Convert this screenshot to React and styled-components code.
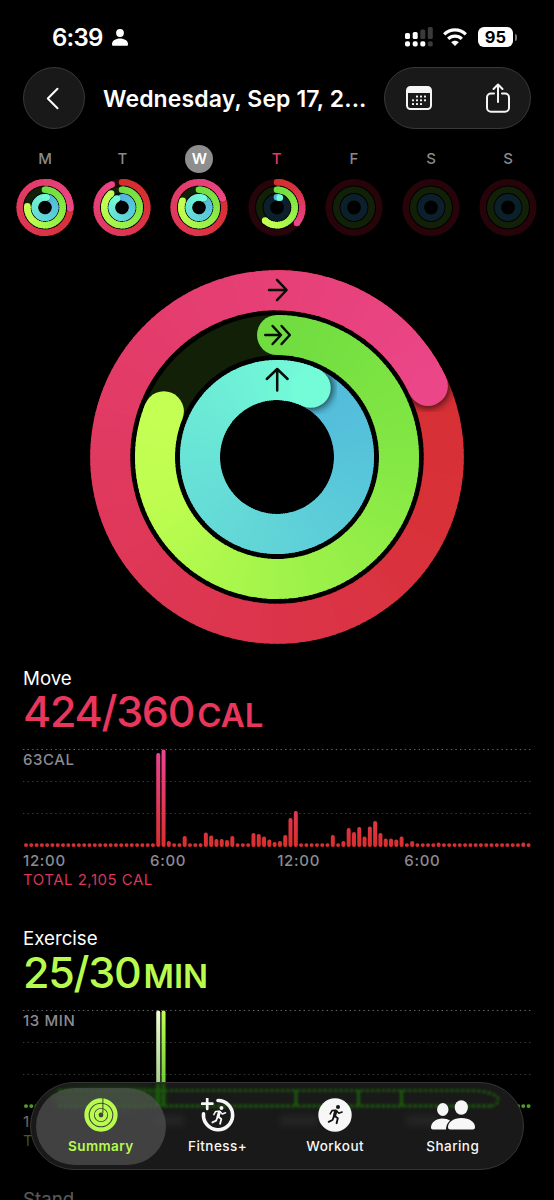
import styled, { createGlobalStyle } from "styled-components";

const GlobalStyle = createGlobalStyle`
  * {
    box-sizing: border-box;
  }
  html,
  body {
    margin: 0;
    background: #000;
  }
  body {
    overflow: hidden;
    font-family: Inter, "Liberation Sans", sans-serif;
    color: #fff;
    -webkit-font-smoothing: antialiased;
  }
`;

const Screen = styled.div`
  position: relative;
  width: 554px;
  height: 1200px;
  overflow: hidden;
  background: #000;
`;

const StatusBar = styled.div`
  display: flex;
  align-items: center;
  justify-content: space-between;
  height: 67px;
  padding: 7px 37.5px 0 52px;
`;

const StatusGroup = styled.div`
  display: flex;
  align-items: center;
  gap: ${(p) => p.$gap}px;
`;

const Time = styled.span`
  font-size: 24px;
  font-weight: 600;
  letter-spacing: -0.75px;
`;

const Battery = styled.div`
  display: flex;
  align-items: center;
`;

const BatteryLevel = styled.span`
  width: 35px;
  height: 20px;
  border-radius: 6px;
  background: #fff;
  color: #000;
  font-size: 16.5px;
  font-weight: 700;
  line-height: 20px;
  text-align: center;
`;

const BatteryTip = styled.span`
  width: 2px;
  height: 7px;
  margin-left: 1.5px;
  border-radius: 0 2px 2px 0;
  background: #777;
`;

const Header = styled.header`
  display: flex;
  align-items: center;
  padding: 0 23px;
`;

const GlassButton = styled.div`
  display: flex;
  align-items: center;
  justify-content: ${(p) => (p.$wide ? "space-between" : "center")};
  flex: none;
  width: ${(p) => (p.$wide ? 147 : 62)}px;
  height: 62px;
  padding: ${(p) => (p.$wide ? "0 20px 0 21px" : "0 3px 0 0")};
  border: 1px solid #383838;
  border-radius: 31px;
  background: #191919;
`;

const Title = styled.h1`
  flex: 1;
  margin: 0 0 0 18px;
  padding-top: 1px;
  font-size: 23px;
  font-weight: 600;
  letter-spacing: 0.12px;
  white-space: nowrap;
`;

const Week = styled.div`
  display: grid;
  grid-template-columns: repeat(7, 77.2px);
  padding: 16.4px 0 0 6.5px;
`;

const Day = styled.div`
  display: flex;
  flex-direction: column;
  align-items: center;
  gap: 5px;
`;

const DayLetter = styled.span`
  width: 28px;
  height: 28px;
  border-radius: 50%;
  background: ${(p) => (p.$selected ? "#8e8e8e" : "transparent")};
  color: ${(p) => (p.$selected ? "#fff" : p.$today ? "#e9365f" : "#8a8a8d")};
  font-size: 15px;
  font-weight: ${(p) => (p.$selected ? 600 : 500)};
  line-height: 28px;
  text-align: center;
`;

const RingsWrap = styled.div`
  display: flex;
  justify-content: center;
  padding: 32.6px 0 24px;
`;

const Section = styled.section`
  height: 260.4px;
  padding: 0 23px;
`;

const SectionName = styled.div`
  height: 22px;
  font-size: 18.7px;
  line-height: 22px;
`;

const Value = styled.div`
  height: 46px;
  margin-top: -1.5px;
  color: ${(p) => p.$color};
  font-size: 43px;
  font-weight: 450;
  line-height: 46px;
  letter-spacing: -1.25px;
  white-space: nowrap;
`;

const Unit = styled.span`
  margin-left: 3px;
  font-size: 33px;
  font-weight: 600;
  letter-spacing: 0;
`;

const Plot = styled.div`
  position: relative;
  height: 98px;
  margin-top: 15px;
`;

const PlotMax = styled.span`
  display: block;
  padding-top: 2px;
  color: #8b8b90;
  font-size: 15px;
  font-weight: 500;
  line-height: 18px;
  letter-spacing: 0.6px;
`;

const PlotCanvas = styled.svg`
  position: absolute;
  inset: 0;
`;

const Axis = styled.div`
  display: grid;
  grid-template-columns: repeat(4, 127.1px);
  padding-top: 4px;
  color: #8b8b90;
  font-size: 15px;
  font-weight: 500;
  line-height: 20px;
  letter-spacing: 0.7px;
`;

const Total = styled.div`
  color: ${(p) => p.$color};
  font-size: 15px;
  line-height: 18px;
  letter-spacing: 0.5px;
`;

const BottomFade = styled.div`
  position: absolute;
  left: 0;
  right: 0;
  bottom: 0;
  height: 110px;
  background: linear-gradient(rgba(0, 0, 0, 0), rgba(0, 0, 0, 0.65) 60%);
`;

const TabBar = styled.nav`
  position: absolute;
  left: 30px;
  bottom: 30px;
  display: flex;
  align-items: center;
  width: 494px;
  height: 88px;
  padding: 0 4.5px;
  overflow: hidden;
  border: 1px solid #353535;
  border-radius: 44px;
  background: #191919;
`;

const Refraction = styled.svg`
  position: absolute;
  left: -1px;
  top: -1px;
`;

const Tab = styled.div`
  position: relative;
  display: flex;
  flex: none;
  flex-direction: column;
  align-items: center;
  width: ${(p) => (p.$active ? 130.6 : 117.6)}px;
  height: 77px;
  margin-right: ${(p) => (p.$active ? -7.3 : 0)}px;
  padding-top: 10.5px;
  border-radius: 39px;
  background: ${(p) => (p.$active ? "rgba(84, 84, 86, 0.68)" : "transparent")};
  color: ${(p) => (p.$active ? "#b8fa4e" : "#f7f7f7")};
`;

const TabLabel = styled.span`
  margin-top: 4.5px;
  font-size: 13.5px;
  font-weight: ${(p) => (p.$active ? 600 : 500)};
  line-height: 18px;
  letter-spacing: ${(p) => (p.$active ? 0.4 : 0.45)}px;
`;

const RINGS = {
  move: {
    track: "#26040a",
    stops: [
      [0, [211, 46, 46]],
      [0.25, [216, 49, 56]],
      [0.5, [221, 54, 82]],
      [0.8, [229, 62, 114]],
      [1, [235, 70, 136]],
    ],
  },
  exercise: {
    track: "#112006",
    stops: [
      [0, [112, 220, 64]],
      [0.3, [131, 231, 68]],
      [0.6, [160, 243, 74]],
      [0.85, [190, 253, 80]],
      [1, [196, 255, 84]],
    ],
  },
  stand: {
    track: "#0c202c",
    stops: [
      [0, [82, 182, 220]],
      [0.25, [87, 197, 218]],
      [0.5, [98, 213, 215]],
      [0.8, [108, 235, 214]],
      [1, [116, 252, 216]],
    ],
  },
};

const mix = (stops, t) => {
  const i = Math.max(1, stops.findIndex(([at]) => at >= t));
  const [a, from] = stops[i - 1];
  const [b, to] = stops[i];
  const k = (t - a) / (b - a);
  return `rgb(${from.map((c, n) => Math.round(c + (to[n] - c) * k)).join(",")})`;
};

const point = (c, r, deg) => {
  const rad = (deg * Math.PI) / 180;
  return [c + r * Math.sin(rad), c - r * Math.cos(rad)];
};

const Ring = ({ id, kind, c, r, width, sweep, shadow }) => {
  const { track, stops } = RINGS[kind];
  const step = r > 50 ? 2 : 8;
  // neighbours overlap by at least a pixel so that no seam shows between them
  const overlap = Math.min(step, 70 / r);
  const segments = [];
  for (let a = 0; a < sweep; a += step) {
    const end = Math.min(sweep, a + step);
    const [x1, y1] = point(c, r, Math.max(0, a - overlap));
    const [x2, y2] = point(c, r, end);
    segments.push({
      from: a,
      d: `M${x1} ${y1}A${r} ${r} 0 0 1 ${x2} ${y2}`,
      color: mix(stops, Math.min(1, a / sweep)),
    });
  }
  const draw = (list) =>
    list.map((s) => (
      <path key={s.from} d={s.d} stroke={s.color} strokeWidth={width} fill="none" />
    ));
  const split = sweep - 60;
  const [sx, sy] = point(c, r, 0);
  const [ex, ey] = point(c, r, sweep);

  return (
    <g>
      <circle cx={c} cy={c} r={r} stroke={track} strokeWidth={width} fill="none" />
      {sweep > 0 && (
        <>
          <circle cx={sx} cy={sy} r={width / 2} fill={mix(stops, 0)} />
          {draw(segments.filter((s) => s.from < split))}
          {sweep > 360 && (
            <>
              <mask id={`${id}-${kind}`}>
                <circle cx={c} cy={c} r={r} stroke="#fff" strokeWidth={width} fill="none" />
              </mask>
              <g mask={`url(#${id}-${kind})`}>
                <circle
                  cx={ex}
                  cy={ey}
                  r={width / 2 + shadow / 2}
                  fill="#000"
                  opacity="0.75"
                  style={{ filter: `blur(${shadow}px)` }}
                />
              </g>
            </>
          )}
          {draw(segments.filter((s) => s.from >= split))}
          <circle cx={ex} cy={ey} r={width / 2} fill={mix(stops, 1)} />
        </>
      )}
    </g>
  );
};

const DAYS = [
  { letter: "M", sweeps: [453, 274, 370] },
  { letter: "T", sweeps: [336, 322, 330] },
  { letter: "W", sweeps: [430, 292, 388], selected: true },
  { letter: "T", sweeps: [128, 222, 16], today: true },
  { letter: "F", sweeps: [0, 0, 0] },
  { letter: "S", sweeps: [0, 0, 0] },
  { letter: "S", sweeps: [0, 0, 0] },
];

const MiniRings = ({ id, sweeps }) => (
  <svg width="58" height="59" viewBox="0 -0.5 58 59">
    <Ring id={id} kind="move" c={29} r={25.3} width={6.5} sweep={sweeps[0]} shadow={0.5} />
    <Ring id={id} kind="exercise" c={29} r={17.7} width={6.6} sweep={sweeps[1]} shadow={0.5} />
    <Ring id={id} kind="stand" c={29} r={10.2} width={6.6} sweep={sweeps[2]} shadow={0.3} />
  </svg>
);

const ActivityRings = () => (
  <svg width="374" height="374" viewBox="0 0 374 374">
    <Ring id="big" kind="move" c={187} r={166.8} width={40} sweep={424.8} shadow={4} />
    <Ring id="big" kind="exercise" c={187} r={122} width={40} sweep={292} shadow={4} />
    <Ring id="big" kind="stand" c={187} r={77} width={40} sweep={386} shadow={4} />
    <g
      fill="none"
      stroke="#060d08"
      strokeWidth="2.5"
      strokeLinecap="round"
      strokeLinejoin="round"
    >
      <path d="M179 20H196.2M187 9.8L196.6 20L187 30.2" />
      <path d="M175.3 65H190.6M182.6 56L191 65L182.6 74M191.6 56L199.8 65L191.6 74" />
      <path d="M187.2 120.6V99.4M176.8 109L187.2 99L197.6 109" />
    </g>
  </svg>
);

const SLOTS = 96;
const MIN_BAR = 3.8;

const fillSlots = (known) =>
  Array.from({ length: SLOTS }, (_, i) => known[i] ?? MIN_BAR);

const MOVE_BARS = fillSlots({
  25: 94, 26: 97.5, 27: 6, 30: 11, 34: 14.5, 35: 11.5, 36: 8, 37: 8, 38: 7,
  39: 11, 43: 14, 44: 13, 45: 10.5, 46: 7.5, 47: 5, 48: 6, 49: 12, 50: 29,
  51: 36, 58: 12, 60: 6, 61: 19, 62: 15, 63: 20, 64: 10.5, 65: 20.5, 66: 26,
  67: 14, 68: 8.5, 69: 8.5, 70: 7.5, 71: 10.5, 73: 6, 78: 4.5, 94: 4.5,
});

const EXERCISE_BARS = fillSlots({ 25: 97.5, 26: 97.5 });

const BarPlot = ({ id, bars, top, bottom, paleSlot }) => (
  <PlotCanvas width="508" height="98" viewBox="0 0 508 98">
    <defs>
      <linearGradient id={id} gradientUnits="userSpaceOnUse" x1="0" y1="0" x2="0" y2="98">
        <stop offset="0" stopColor={top} />
        <stop offset="1" stopColor={bottom} />
      </linearGradient>
      <linearGradient id={`${id}-pale`} gradientUnits="userSpaceOnUse" x1="0" y1="0" x2="0" y2="98">
        <stop offset="0" stopColor="#efffd6" />
        <stop offset="1" stopColor="#8fbf70" />
      </linearGradient>
    </defs>
    {[0.5, 32.5, 64.5].map((y, i) => (
      <path
        key={y}
        d={`M0 ${y}H508`}
        stroke={i === 0 ? "#666" : "#3c3c3c"}
        strokeWidth="1"
        strokeDasharray="1.4 3.2"
      />
    ))}
    {bars.map((h, i) => (
      <rect
        key={i}
        x={1 + i * 5.29}
        y={98 - h}
        width="4"
        height={h}
        rx="1.9"
        fill={`url(#${i === paleSlot ? `${id}-pale` : id})`}
      />
    ))}
  </PlotCanvas>
);

const Metric = ({ name, value, unit, color, max, total, totalColor, children }) => (
  <Section>
    <SectionName>{name}</SectionName>
    <Value $color={color}>
      {value}
      <Unit>{unit}</Unit>
    </Value>
    <Plot>
      {children}
      <PlotMax>{max}</PlotMax>
    </Plot>
    <Axis>
      <span>12:00</span>
      <span>6:00</span>
      <span>12:00</span>
      <span>6:00</span>
    </Axis>
    <Total $color={totalColor}>{total}</Total>
  </Section>
);

const PersonIcon = () => (
  <svg width="16" height="17" viewBox="0 0 16 17" fill="#fff">
    <circle cx="8" cy="4" r="3.9" />
    <path d="M0 15.2C0 11.8 3.5 9.6 8 9.6s8 2.2 8 5.6c0 1-.5 1.5-1.5 1.5h-13C.5 16.7 0 16.2 0 15.2z" />
  </svg>
);

const SignalIcon = () => (
  <svg width="28" height="20" viewBox="0 0 28 20">
    <g fill="#fff">
      <rect x="0" y="6" width="5" height="6" rx="1.6" />
      <rect x="7.7" y="5" width="5" height="7" rx="1.6" />
      <rect x="0" y="14.2" width="5" height="5.3" rx="1.9" />
      <rect x="7.7" y="14.2" width="5" height="5.3" rx="1.9" />
      <rect x="15.3" y="14.2" width="5" height="5.3" rx="1.9" />
    </g>
    <g fill="#3a3a3a">
      <rect x="15.3" y="2.5" width="5" height="9.5" rx="1.6" />
      <rect x="22.8" y="0" width="5" height="12" rx="1.6" />
      <rect x="22.8" y="14.2" width="5" height="5.3" rx="1.9" />
    </g>
  </svg>
);

const WifiIcon = () => (
  <svg width="24" height="18" viewBox="0 0 24 18" fill="none" stroke="#fff" strokeWidth="3.2">
    <path d="M1.2 6.4C7.2 .4 16.8 .4 22.8 6.4" />
    <path d="M5.2 10.8C9 7.1 15 7.1 18.8 10.8" />
    <path d="M12 18L8.2 14.2C10.5 12.2 13.5 12.2 15.8 14.2z" fill="#fff" stroke="none" />
  </svg>
);

const BackIcon = () => (
  <svg width="13" height="23" viewBox="0 0 13 23">
    <path
      d="M11.5 1.8L1.8 11.5L11.5 21.2"
      fill="none"
      stroke="#fff"
      strokeWidth="2"
      strokeLinecap="round"
      strokeLinejoin="round"
    />
  </svg>
);

const CalendarIcon = () => (
  <svg width="26" height="24" viewBox="0 0 26 24">
    <rect x="1" y="1" width="24" height="22" rx="3.5" fill="none" stroke="#f5f5f5" strokeWidth="2" />
    <path d="M1 7V4.5A3.5 3.5 0 0 1 4.5 1h17A3.5 3.5 0 0 1 25 4.5V7z" fill="#f5f5f5" />
    <g fill="#f5f5f5">
      {[
        [10, 10.4], [14, 10.4], [18, 10.4],
        [6, 14.2], [10, 14.2], [14, 14.2], [18, 14.2],
        [6, 18], [10, 18], [14, 18],
      ].map(([x, y]) => (
        <rect key={`${x}-${y}`} x={x} y={y - 0.9} width="2" height="2" rx=".5" />
      ))}
    </g>
  </svg>
);

const ShareIcon = () => (
  <svg
    width="24"
    height="31"
    viewBox="0 0 24 31"
    fill="none"
    stroke="#f5f5f5"
    strokeWidth="2"
    strokeLinecap="round"
    strokeLinejoin="round"
  >
    <path d="M8 10.5H5A4 4 0 0 0 1 14.5V24.8A4 4 0 0 0 5 28.8H19A4 4 0 0 0 23 24.8V14.5A4 4 0 0 0 19 10.5H16" />
    <path d="M12 19V1.7M7.5 6L12 1.5L16.5 6" />
  </svg>
);

const Runner = ({ x, y, scale = 1, color }) => (
  <g transform={`translate(${x} ${y}) scale(${scale})`}>
    <circle cx="10.2" cy="2" r="2" fill={color} />
    <g fill="none" stroke={color} strokeLinecap="round" strokeLinejoin="round">
      <path d="M8 6.3L6.7 10.8" strokeWidth="3.2" />
      <path d="M7.8 5.4L4.2 5.6L2.4 8.8" strokeWidth="1.6" />
      <path d="M8.7 5.7L11 8.2L14.3 7" strokeWidth="1.6" />
      <path d="M7 11L10 13.2L8.8 18.2" strokeWidth="1.9" />
      <path d="M6.2 11.2L4.7 15L.9 16.8" strokeWidth="1.9" />
    </g>
  </g>
);

const SummaryIcon = () => (
  <svg width="34" height="34" viewBox="0 0 34 34" fill="none" stroke="#b8fa4e">
    <circle cx="17" cy="17" r="14.5" strokeWidth="4.3" />
    <circle cx="17" cy="17" r="9.2" strokeWidth="4.2" />
    <circle cx="17" cy="17" r="4.3" strokeWidth="3.8" />
    <path d="M18.9 0V15" stroke="#3b4526" strokeWidth="1" />
  </svg>
);

const FitnessIcon = () => (
  <svg width="34" height="34" viewBox="0 0 34 34">
    <g fill="none" stroke="#f7f7f7" strokeWidth="3.6" strokeLinecap="round">
      <path d="M17 2.5A14.6 14.6 0 1 1 2.5 15.8" />
      <path d="M6.2 0.5V10.9M1 5.7H11.4" strokeWidth="2.7" />
    </g>
    <Runner x={10.5} y={8} color="#f7f7f7" scale={0.98} />
  </svg>
);

const WorkoutIcon = () => (
  <svg width="34" height="34" viewBox="0 0 34 34">
    <circle cx="17" cy="17" r="16.7" fill="#f7f7f7" />
    <Runner x={9.8} y={7} color="#151515" />
  </svg>
);

const SharingIcon = () => (
  <svg width="46" height="34" viewBox="0 0 46 34" fill="#f7f7f7">
    <ellipse cx="12.8" cy="11.5" rx="5.7" ry="6.5" />
    <path d="M1 29.5C1 24.5 6 20.5 12.5 20.5C15.5 20.5 18 21.2 20 22.5C17.3 25 16 27.8 16 31.5H3C1.7 31.5 1 30.8 1 29.5z" />
    <ellipse cx="31.3" cy="9.5" rx="6.6" ry="7.3" />
    <path d="M18 29C18 24 23.5 20 31.5 20S45 24 45 29C45 30.7 44.2 31.5 42.5 31.5H20.5C18.8 31.5 18 30.7 18 29z" />
  </svg>
);

// the exercise chart seen through the glass of the bar
const GlassRefraction = () => (
  <Refraction width="494" height="88" viewBox="0 0 494 88">
    <g stroke="#1c6409" fill="none" style={{ filter: "blur(0.9px)" }}>
      <path d="M28 24H462" strokeWidth="4" strokeDasharray="4 1.3" opacity=".65" />
      <path d="M28 8.5H440Q462 9 468 16Q469 23 461 24" strokeWidth="3.5" strokeDasharray="4 1.3" opacity=".6" />
      <path d="M266 8V24M328.5 8V24M371.5 8V24" strokeWidth="3.5" opacity=".75" />
      <path d="M128 1V24M133.5 1V24" strokeWidth="4" opacity=".75" />
    </g>
    <ellipse cx="78" cy="16" rx="58" ry="11" fill="#1f7a08" opacity=".4" style={{ filter: "blur(5px)" }} />
    <g fill="#242424" style={{ filter: "blur(3px)" }}>
      <rect x="124" y="33" width="30" height="11" />
      <rect x="250" y="33" width="38" height="11" />
      <rect x="376" y="33" width="32" height="11" />
    </g>
  </Refraction>
);

const TABS = [
  { label: "Summary", Icon: SummaryIcon, active: true },
  { label: "Fitness+", Icon: FitnessIcon },
  { label: "Workout", Icon: WorkoutIcon },
  { label: "Sharing", Icon: SharingIcon },
];

const App = () => {
  return (
    <Screen>
      <GlobalStyle />
      <StatusBar>
        <StatusGroup $gap={9}>
          <Time>6:39</Time>
          <PersonIcon />
        </StatusGroup>
        <StatusGroup $gap={10.6}>
          <SignalIcon />
          <WifiIcon />
          <Battery>
            <BatteryLevel>95</BatteryLevel>
            <BatteryTip />
          </Battery>
        </StatusGroup>
      </StatusBar>

      <Header>
        <GlassButton>
          <BackIcon />
        </GlassButton>
        <Title>Wednesday, Sep 17, 2...</Title>
        <GlassButton $wide>
          <CalendarIcon />
          <ShareIcon />
        </GlassButton>
      </Header>

      <Week>
        {DAYS.map((day, i) => (
          <Day key={i}>
            <DayLetter $selected={day.selected} $today={day.today}>
              {day.letter}
            </DayLetter>
            <MiniRings id={`day${i}`} sweeps={day.sweeps} />
          </Day>
        ))}
      </Week>

      <RingsWrap>
        <ActivityRings />
      </RingsWrap>

      <Metric
        name="Move"
        value="424/360"
        unit="CAL"
        color="#e8365c"
        max="63CAL"
        total="TOTAL 2,105 CAL"
        totalColor="#d8365a"
      >
        <BarPlot id="move-bars" bars={MOVE_BARS} top="#ec4594" bottom="#d92f2c" />
      </Metric>
      <Metric
        name="Exercise"
        value="25/30"
        unit="MIN"
        color="#b8fa4e"
        max="13 MIN"
        total="TOTAL 25 MIN"
        totalColor="#7ea62f"
      >
        <BarPlot id="exercise-bars" bars={EXERCISE_BARS} top="#c0ff55" bottom="#58bb2c" paleSlot={25} />
      </Metric>
      <Section>
        <SectionName>Stand</SectionName>
      </Section>

      <BottomFade />
      <TabBar>
        <GlassRefraction />
        {TABS.map(({ label, Icon, active }) => (
          <Tab key={label} $active={active}>
            <Icon />
            <TabLabel $active={active}>{label}</TabLabel>
          </Tab>
        ))}
      </TabBar>
    </Screen>
  );
};

export default App;
